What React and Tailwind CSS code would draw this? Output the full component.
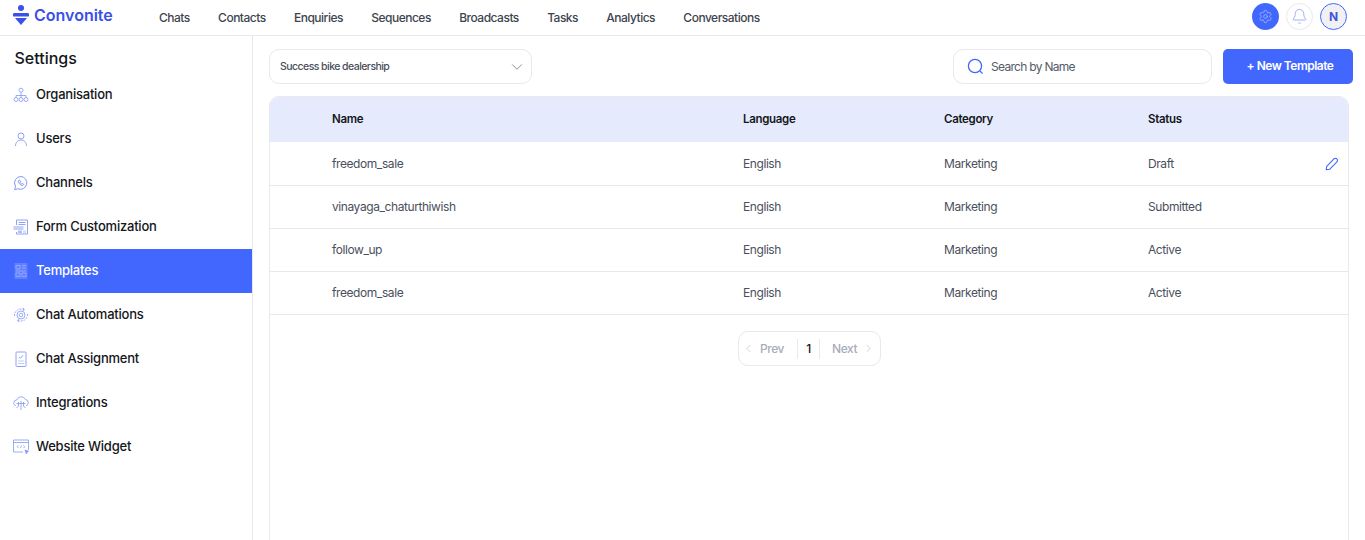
import React from 'react';
import { ChevronDown, ChevronLeft, ChevronRight, Bell, Settings as SettingsIcon } from 'lucide-react';

const font = "font-['Inter','Liberation_Sans',sans-serif]";

const OrgIcon = () => (
  <svg viewBox="0 0 16 16" className="w-4 h-4" fill="none" stroke="currentColor" strokeWidth="0.8">
    <circle cx="8" cy="3.2" r="2" />
    <circle cx="3" cy="12.5" r="2" />
    <circle cx="8" cy="12.5" r="2" />
    <circle cx="13" cy="12.5" r="2" />
    <path d="M8 5.2v5.3M3 10.5V8.5h10v2" />
  </svg>
);
const UserIcon = () => (
  <svg viewBox="0 0 16 16" className="w-4 h-4" fill="none" stroke="currentColor" strokeWidth="0.9">
    <circle cx="8" cy="5" r="3" />
    <path d="M2.5 15c0-3.5 2.4-6 5.5-6s5.5 2.5 5.5 6" />
  </svg>
);
const WhatsappIcon = () => (
  <svg viewBox="0 0 16 16" className="w-4 h-4" fill="none" stroke="currentColor" strokeWidth="1">
    <path d="M8 1.5a6.4 6.4 0 0 0-5.5 9.7L1.7 14.6l3.3-.8A6.4 6.4 0 1 0 8 1.5z" />
    <path d="M5.8 5.3c-.8.8-.5 2 .6 3.4 1.2 1.4 2.6 2.2 3.6 1.6.5-.3.7-.8.6-1.1L9.4 8.5l-.7.6c-.6-.2-1.3-.9-1.6-1.6l.6-.7-.7-1.5c-.4-.2-.8-.1-1.2 0z" />
  </svg>
);
const FormIcon = () => (
  <svg viewBox="0 0 16 16" className="w-4 h-4" fill="none" stroke="currentColor" strokeWidth="0.9">
    <path d="M3.5 6V1h11v14h-11v-2" />
    <path d="M5.5 3.5h7M5.5 5.5h7M.5 8h10M.5 10h10" />
    <rect x="5" y="11.5" width="4" height="2.5" fill="currentColor" stroke="none" opacity="0.6" />
    <rect x="10" y="11.5" width="3" height="2.5" fill="currentColor" stroke="none" opacity="0.35" />
  </svg>
);
const TemplateIcon = () => (
  <svg viewBox="0 0 16 16" className="w-4 h-4" fill="none" stroke="currentColor" strokeWidth="0.8">
    <rect x="1.5" y="0" width="13" height="16" fill="currentColor" fillOpacity="0.35" stroke="none" />
    <path d="M3 2.5h4v3.5H3zM9 2.5h4M9 5h4M3 8h10M3 10h4v3.5H3zM9 10h4v3.5H9z" />
  </svg>
);
const AutomationIcon = () => (
  <svg viewBox="0 0 16 16" className="w-4 h-4" fill="none" stroke="currentColor" strokeWidth="0.8">
    <circle cx="8" cy="8" r="4" />
    <circle cx="8" cy="8" r="1.8" />
    <path d="M1.5 9a6.5 6.5 0 0 1 9.5-6.3M14.5 7a6.5 6.5 0 0 1-9.5 6.3" strokeDasharray="2 1" />
    <path d="M10 1l1.4 1.7L9.6 4M6 15l-1.4-1.7L6.4 12" />
  </svg>
);
const AssignIcon = () => (
  <svg viewBox="0 0 16 16" className="w-4 h-4" fill="none" stroke="currentColor" strokeWidth="0.9">
    <rect x="3" y="1" width="10" height="14.5" rx="0.8" />
    <path d="M6 6l1.3 1.3L10 4.2" />
    <path d="M5 10h6M5 12.5h6" strokeOpacity="0.55" />
  </svg>
);
const IntegrationIcon = () => (
  <svg viewBox="0 0 16 16" className="w-4 h-4" fill="none" stroke="currentColor" strokeWidth="0.8">
    <path d="M2.8 10.5H2L.6 8.5l1.2-3 2-.5a4.6 4.6 0 0 1 8.6-.5l2 .8 1 2.7-1.4 2.5h-.8" />
    <path d="M8 6v9M5.5 7v4L3.5 13M10.5 7v4l2 2M3.5 8.5h9" />
  </svg>
);
const WidgetIcon = () => (
  <svg viewBox="0 0 16 16" className="w-4 h-4" fill="none" stroke="currentColor" strokeWidth="0.8">
    <path d="M10 13H.5V1h15v10" />
    <path d="M.5 3.5h15M5.5 6.5L4.3 7.8l1.2 1.3M10.5 6.5l1.2 1.3-1.2 1.3M7.5 9.1l1-2.6" />
    <path d="M12 11l3.5 1.3-1.4.7-.7 1.9z" fill="currentColor" />
  </svg>
);

const navLinks = ['Chats', 'Contacts', 'Enquiries', 'Sequences', 'Broadcasts', 'Tasks', 'Analytics', 'Conversations'];

const sideItems = [
  { label: 'Organisation', icon: <OrgIcon /> },
  { label: 'Users', icon: <UserIcon /> },
  { label: 'Channels', icon: <WhatsappIcon /> },
  { label: 'Form Customization', icon: <FormIcon /> },
  { label: 'Templates', icon: <TemplateIcon />, active: true },
  { label: 'Chat Automations', icon: <AutomationIcon /> },
  { label: 'Chat Assignment', icon: <AssignIcon /> },
  { label: 'Integrations', icon: <IntegrationIcon /> },
  { label: 'Website Widget', icon: <WidgetIcon /> },
];

const rows = [
  { name: 'freedom_sale', status: 'Draft', editable: true },
  { name: 'vinayaga_chaturthiwish', status: 'Submitted' },
  { name: 'follow_up', status: 'Active' },
  { name: 'freedom_sale', status: 'Active' },
];

const App = () => {
  return (
    <div className={`${font} h-[540px] overflow-hidden bg-white flex flex-col`}>
      {/* Top bar */}
      <header className="h-[36px] shrink-0 border-b border-[#e8e8ea] flex items-center pl-[13px] pr-[18px]">
        <div className="w-[146px] flex items-center gap-[5px] -mt-[6px]">
          <svg viewBox="0 0 16 20" className="w-[16px] h-[20px] text-[#3b50e6]" fill="currentColor">
            <circle cx="8" cy="3" r="3" />
            <rect x="0" y="8" width="16" height="3.6" rx="1.2" />
            <path d="M2 13h12L8 20z" />
          </svg>
          <span className="text-[16px] font-semibold text-[#3b50e6] leading-none">Convonite</span>
        </div>
        <nav className="flex items-center gap-[28.3px] text-[12px] font-medium tracking-[-0.5px] text-[#3d4450] pt-[1px]">
          {navLinks.map((link) => (
            <span key={link}>{link}</span>
          ))}
        </nav>
        <div className="ml-auto -mt-[2px] flex items-center gap-[7px]">
          <div className="w-[27px] h-[27px] rounded-full bg-[#4167ff] flex items-center justify-center text-[#a9bbff]">
            <SettingsIcon className="w-[15px] h-[15px]" strokeWidth={1.2} />
          </div>
          <div className="w-[27px] h-[27px] rounded-full border border-[#e8e8ee] flex items-center justify-center text-[#8fa3f7]">
            <Bell className="w-[17px] h-[17px]" strokeWidth={1.2} />
          </div>
          <div className="w-[27px] h-[27px] rounded-full border border-[#4167ff] bg-[#f1f1f3] flex items-center justify-center text-[12px] font-bold text-[#3f56d8]">
            N
          </div>
        </div>
      </header>

      <div className="flex flex-1 min-h-0">
        {/* Sidebar */}
        <aside className="w-[253px] shrink-0 border-r border-[#e8e8ea]">
          <h2 className="pl-[14.5px] pt-[10px] h-[37px] text-[16px] font-medium leading-[24px] text-[#14161a]">Settings</h2>
          <ul>
            {sideItems.map((item) => (
              <li
                key={item.label}
                className={`h-[44px] pl-[13px] flex items-center gap-[7px] text-[13px] font-[450] tracking-[-0.22px] ${
                  item.active ? 'bg-[#4167ff] text-white' : 'text-[#14161a]'
                }`}
              >
                <span className={item.active ? 'text-[#9db0ff]' : 'text-[#8298f5]'}>{item.icon}</span>
                {item.label}
              </li>
            ))}
          </ul>
        </aside>

        {/* Main */}
        <main className="flex-1 min-w-0 pt-[13px] pl-[16px] pr-[12px]">
          <div className="flex items-center h-[35px]">
            <div className="w-[263px] h-[35px] rounded-[10px] border border-[#e8e8ee] pl-[10px] pr-[5px] flex items-center justify-between text-[10.5px] font-medium tracking-[-0.55px] text-[#4a4f5c]">
              <span>Success bike dealership</span>
              <ChevronDown className="w-[18px] h-[18px] text-[#7d8290]" strokeWidth={1.2} />
            </div>
            <div className="ml-auto w-[259px] h-[35px] rounded-[10px] border border-[#e8e8ee] pl-[13px] flex items-center gap-[7px] text-[12px] tracking-[-0.7px] text-[#555b68]">
              <svg viewBox="0 0 17 17" className="w-[17px] h-[17px] text-[#4167ff]" fill="none" stroke="currentColor" strokeWidth="1.3">
                <circle cx="8" cy="8" r="6.6" />
                <path d="M13 13l2.6 2.6" />
              </svg>
              <span>Search by Name</span>
            </div>
            <button className="ml-[11px] w-[130px] h-[35px] rounded-[5px] bg-[#4167ff] text-white text-[12px] font-semibold tracking-[-0.5px] pb-[2px] pl-[4px]">
              + New Template
            </button>
          </div>

          <div className="mt-[12px] mr-[4px] h-[460px] rounded-t-[10px] border border-[#e8e8ee] overflow-hidden">
            <div className="h-[45px] bg-[#e5eafd] pl-[62px] grid grid-cols-[411px_201px_204px_1fr] items-center text-[11.5px] font-semibold tracking-[-0.32px] text-[#14161a]">
              <span>Name</span>
              <span>Language</span>
              <span>Category</span>
              <span>Status</span>
            </div>
            {rows.map((row, i) => (
              <div
                key={i}
                className={`${i === 0 ? 'h-[44px]' : 'h-[43px]'} border-b border-[#e8e8ea] pl-[62px] pr-[9px] grid grid-cols-[411px_201px_204px_1fr] items-center text-[12px] tracking-[-0.42px] text-[#4a4f5c]`}
              >
                <span>{row.name}</span>
                <span>English</span>
                <span>Marketing</span>
                <span className="flex items-center justify-between">
                  {row.status}
                  {row.editable && (
                    <svg viewBox="0 0 14 14" className="w-[14px] h-[14px] text-[#4167ff]" fill="none" stroke="currentColor" strokeWidth="1.1">
                      <path d="M1.2 12.8l.5-3.4L8.9 1.9a2 2 0 0 1 2.9 0 2 2 0 0 1 .1 2.9L4.6 12.3z" strokeLinejoin="round" />
                    </svg>
                  )}
                </span>
              </div>
            ))}
            {/* Pagination */}
            <div className="flex justify-center pt-[16px] pl-[1px]">
              <div className="h-[35px] w-[143px] rounded-[10px] border border-[#e8e8ee] flex items-center text-[12px] font-medium tracking-[-0.45px] text-[#a9acb9]">
                <div className="w-[58px] pl-[3px] flex items-center gap-[5px]">
                  <ChevronLeft className="w-[13px] h-[13px] text-[#c4c6cf]" strokeWidth={1.4} />
                  <span>Prev</span>
                </div>
                <span className="w-[23px] h-[20px] border-x border-[#e8e8ee] flex items-center justify-center text-[#14161a]">1</span>
                <div className="flex-1 pl-[12px] flex items-center gap-[5px]">
                  <span>Next</span>
                  <ChevronRight className="w-[13px] h-[13px] text-[#c4c6cf]" strokeWidth={1.4} />
                </div>
              </div>
            </div>
          </div>
        </main>
      </div>
    </div>
  );
};

export default App;
